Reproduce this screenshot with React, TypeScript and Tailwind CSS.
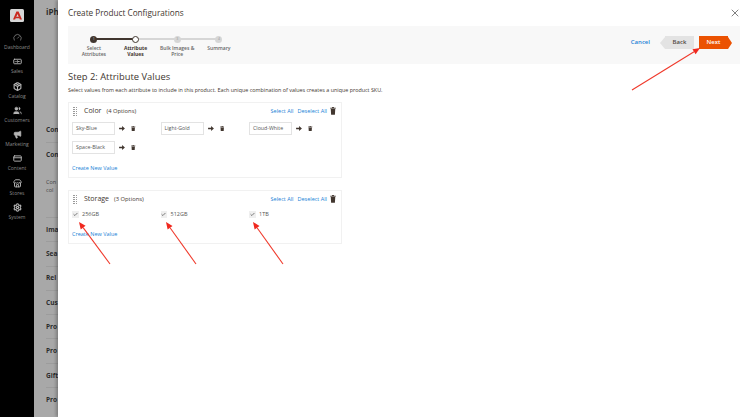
import { Gauge, Banknote, Package, Users, Megaphone, CreditCard, Store, Settings, X, Check } from 'lucide-react';

const navItems = [
  { label: 'Dashboard', Icon: Gauge, filled: false, weight: 1.5 },
  { label: 'Sales', Icon: Banknote, filled: false, weight: 2.5 },
  { label: 'Catalog', Icon: Package, filled: false, weight: 3 },
  { label: 'Customers', Icon: Users, filled: true, weight: 1.5 },
  { label: 'Marketing', Icon: Megaphone, filled: true, weight: 1.5 },
  { label: 'Content', Icon: CreditCard, filled: false, weight: 2.5 },
  { label: 'Stores', Icon: Store, filled: false, weight: 2.5 },
  { label: 'System', Icon: Settings, filled: false, weight: 3 },
];

const steps = [
  { num: '1', label: ['Select', 'Attributes'], state: 'done' },
  { num: '2', label: ['Attribute', 'Values'], state: 'active' },
  { num: '3', label: ['Bulk Images &', 'Price'], state: 'todo' },
  { num: '4', label: ['Summary'], state: 'todo' },
];

const lowerRows = ['Ima', 'Sea', 'Rel', 'Cus', 'Pro', 'Pro', 'Gift', 'Pro'];

function TrashIcon({ width = 4.5 }: { width?: number }) {
  return (
    <svg width={width} height={width * 1.3} viewBox="0 0 8 10.4" fill="#41362f" className="shrink-0">
      <rect x="0.3" y="1" width="7.4" height="1.2" />
      <rect x="2.8" y="0" width="2.4" height="1.4" />
      <path d="M1 2.8h6l-.5 7.6h-5z" />
    </svg>
  );
}

function ArrowIcon() {
  return (
    <svg width="6" height="5" viewBox="0 0 7 6" fill="#41362f" className="shrink-0">
      <path d="M0 2h3.6V0L7 3 3.6 6V4H0z" />
    </svg>
  );
}

function Grip() {
  return (
    <div className="grid grid-cols-2 gap-x-px gap-y-px w-[4px] shrink-0">
      {Array.from({ length: 10 }).map((_, i) => (
        <span key={i} className="w-[1.5px] h-[1px] bg-[#9a9a9a]" />
      ))}
    </div>
  );
}

function ValueInput({ value }: { value: string }) {
  return (
    <div className="flex items-center">
      <div className="w-[43px] h-[13px] border border-[#e3e3e3] bg-white flex items-center pl-[3px] text-[5.25px] text-[#555]">
        {value}
      </div>
      <div className="ml-[4px] w-[6px]"><ArrowIcon /></div>
      <div className="ml-[6px]"><TrashIcon /></div>
    </div>
  );
}

function CheckValue({ value }: { value: string }) {
  return (
    <div className="flex items-center h-[9px]">
      <div className="w-[6.5px] h-[6.5px] bg-[#efefef] flex items-center justify-center">
        <Check size={5} strokeWidth={3} color="#333" />
      </div>
      <span className="ml-[3.5px] text-[5.5px] text-[#555]">{value}</span>
    </div>
  );
}

function AttributeCard({
  name,
  options,
  children,
  height,
}: {
  name: string;
  options: string;
  children: React.ReactNode;
  height: string;
}) {
  return (
    <section className={`border border-[#f1f1f1] w-[274px] px-[3px] pt-[3px] ${height}`}>
      <div className="flex items-center h-[10px] pl-[1px] pr-[2px]">
        <Grip />
        <span className="ml-[7px] text-[7px] text-[#41362f]">{name}</span>
        <span className="ml-[5px] text-[5.8px] text-[#41362f]">{options}</span>
        <div className="ml-auto flex items-center text-[5.5px] text-[#1a7fd6]">
          <span>Select All</span>
          <span className="ml-[4px]">Deselect All</span>
          <span className="ml-[3px]"><TrashIcon width={6} /></span>
        </div>
      </div>
      {children}
    </section>
  );
}

export default function App() {
  return (
    <div className="relative flex w-[750px] h-[417px] overflow-hidden bg-white font-['Open_Sans',sans-serif]">
      {/* Admin sidebar */}
      <aside className="w-[34px] shrink-0 bg-black flex flex-col items-center pt-[9px]">
        <div className="w-[14px] h-[13px] rounded-[1.5px] bg-[#d6d6d6] flex items-center justify-center">
          <svg width="9" height="9" viewBox="0 0 10 10" fill="#c9291f">
            <path d="M3.8 0.5h2.4L10 9.5H7.6L5 3.4 2.4 9.5H0z" />
            <path d="M3.6 6.4h2.8l.7 1.7H3z" />
          </svg>
        </div>
        <nav className="mt-[11px] flex flex-col">
          {navItems.map(({ label, Icon, filled, weight }) => (
            <div key={label} className="h-[24.3px] flex flex-col items-center">
              <Icon size={9} color="#b4b4b4" strokeWidth={weight} fill={filled ? '#b4b4b4' : 'none'} />
              <span className="mt-[2px] text-[5px] leading-[6px] text-[#8a8a8a]">{label}</span>
            </div>
          ))}
        </nav>
      </aside>

      {/* Product page behind the slide-in */}
      <div className="w-[24px] shrink-0 bg-[#a8a8a8] overflow-hidden pl-[12px] text-[#2c2c2c] font-bold whitespace-nowrap">
        <div className="pt-[6px] text-[8px] leading-[12px]">iPh</div>
        <div className="mt-[100px] text-[6.5px]">
          <div className="h-[24.3px] flex items-center">Con</div>
          <div className="h-[24.3px] flex items-center border-t border-[#9c9c9c]">Con</div>
          <div className="h-[50.4px] pt-[11.5px] text-[5.5px] leading-[8px] font-normal text-[#444]">
            <div>Con</div>
            <div>col</div>
          </div>
          {lowerRows.map((row, i) => (
            <div key={i} className="h-[24.3px] flex items-center border-t border-[#9c9c9c]">{row}</div>
          ))}
        </div>
      </div>

      {/* Slide-in modal */}
      <main className="flex-1 min-w-0 bg-white shadow-[-2px_0_3px_rgba(0,0,0,0.25)] pl-[10px] pr-[10px]">
        <header className="h-[26px] flex items-center justify-between pt-[1px]">
          <h1 className="text-[8.2px] text-[#41362f]">Create Product Configurations</h1>
          <X size={12} color="#555" strokeWidth={1.5} className="mr-[-1px] mt-[-2px]" />
        </header>

        {/* Wizard bar */}
        <div className="h-[38px] bg-[#f8f8f8] flex items-start justify-between pl-[5px] pr-[8px]">
          <ol className="flex pt-[9.5px]">
            {steps.map((step, i) => (
              <li key={step.num} className="relative w-[41.7px] flex flex-col items-center">
                {i < 3 && (
                  <span
                    className={`absolute left-1/2 top-[2.5px] h-[2px] w-[41.7px] ${
                      i === 0 ? 'bg-[#41362f]' : 'bg-[#d6d6d6]'
                    }`}
                  />
                )}
                <span
                  className={`relative w-[7px] h-[7px] rounded-full flex items-center justify-center text-[3.5px] ${
                    step.state === 'done'
                      ? 'bg-[#41362f] text-[#ccc]'
                      : step.state === 'active'
                        ? 'bg-white border-[1.5px] border-[#41362f]'
                        : 'bg-[#d6d6d6] text-[#999]'
                  }`}
                >
                  {step.state !== 'active' && step.num}
                </span>
                <span
                  className={`mt-[2.5px] text-center text-[5px] leading-[6px] whitespace-nowrap ${
                    step.state === 'active' ? 'font-bold text-[#41362f]' : 'font-semibold text-[#666]'
                  }`}
                >
                  {step.label.map((line) => (
                    <span key={line} className="block">{line}</span>
                  ))}
                </span>
              </li>
            ))}
          </ol>
          <div className="flex items-center h-[33px]">
            <span className="text-[6px] font-semibold text-[#1a7fd6]">Cancel</span>
            <div className="ml-[10px] flex items-center">
              <span className="w-0 h-0 border-y-[6.5px] border-y-transparent border-r-[5px] border-r-[#e3e3e3]" />
              <span className="w-[29px] h-[13px] bg-[#e3e3e3] flex items-center justify-center text-[6px] font-semibold text-[#514943]">Back</span>
            </div>
            <div className="ml-[5px] flex items-center">
              <span className="w-[29px] h-[13px] bg-[#eb5202] flex items-center justify-center text-[6px] font-semibold text-white">Next</span>
              <span className="w-0 h-0 border-y-[6.5px] border-y-transparent border-l-[4px] border-l-[#eb5202]" />
            </div>
          </div>
        </div>

        <h2 className="mt-[5px] text-[9.4px] leading-[15px] text-[#41362f]">Step 2: Attribute Values</h2>
        <p className="mt-[2px] text-[5.4px] leading-[8px] text-[#41362f]">
          Select values from each attribute to include in this product. Each unique combination of values creates a unique product SKU.
        </p>

        <div className="mt-[8px] flex flex-col gap-[12px]">
          <AttributeCard name="Color" options="(4 Options)" height="h-[76px]">
            <div className="mt-[6px] grid grid-cols-[88.5px_88.5px_88.5px] gap-y-[6px]">
              <ValueInput value="Sky-Blue" />
              <ValueInput value="Light-Gold" />
              <ValueInput value="Cloud-White" />
              <ValueInput value="Space-Black" />
            </div>
            <div className="mt-[9.5px] text-[5.5px] text-[#1a7fd6]">Create New Value</div>
          </AttributeCard>

          <AttributeCard name="Storage" options="(3 Options)" height="h-[54px]">
            <div className="mt-[6px] grid grid-cols-[88.5px_88.5px_88.5px]">
              <CheckValue value="256GB" />
              <CheckValue value="512GB" />
              <CheckValue value="1TB" />
            </div>
            <div className="mt-[11px] text-[5.5px] text-[#1a7fd6]">Create New Value</div>
          </AttributeCard>
        </div>
      </main>

      {/* Red annotation arrows */}
      <svg className="absolute inset-0 pointer-events-none" width="750" height="417" viewBox="0 0 750 417">
        {[
          [110, 264, 79, 222],
          [196, 264, 166, 222],
          [283, 264, 253, 222],
          [632, 90, 700, 48],
        ].map(([x1, y1, x2, y2], i) => {
          const a = Math.atan2(y2 - y1, x2 - x1);
          const len = 7;
          const wing = 3;
          const bx = x2 - len * Math.cos(a);
          const by = y2 - len * Math.sin(a);
          const nx = -Math.sin(a) * wing;
          const ny = Math.cos(a) * wing;
          return (
            <g key={i}>
              <line x1={x1} y1={y1} x2={bx} y2={by} stroke="#f0392b" strokeWidth="1.1" />
              <polygon points={`${x2},${y2} ${bx + nx},${by + ny} ${bx - nx},${by - ny}`} fill="#f0281e" />
            </g>
          );
        })}
      </svg>
    </div>
  );
}
